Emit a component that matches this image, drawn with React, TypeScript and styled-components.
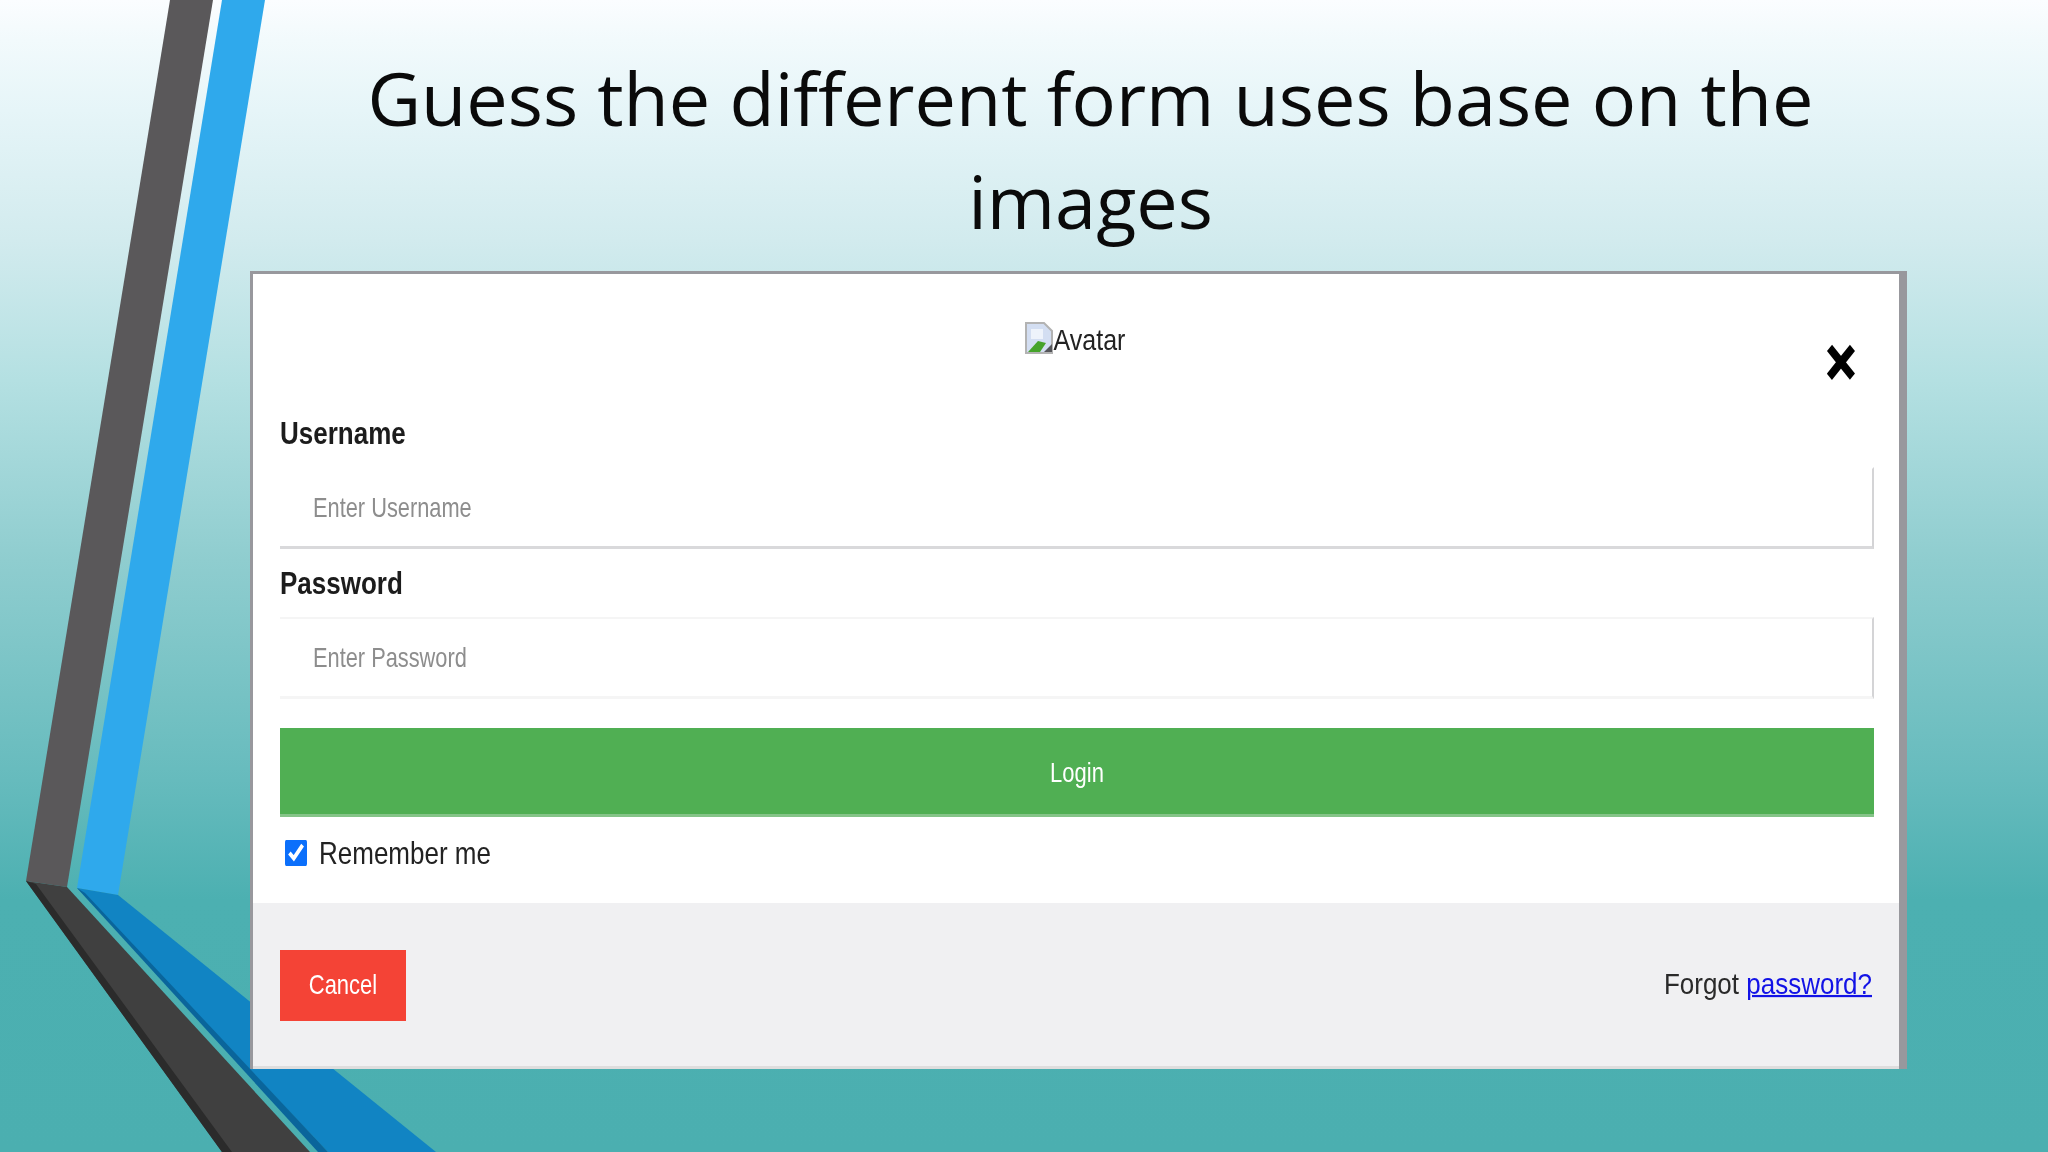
import React from 'react';
import styled, { createGlobalStyle } from 'styled-components';

const GlobalStyle = createGlobalStyle`
  html, body {
    margin: 0;
    padding: 0;
    background: #4bafb0;
  }
  * {
    box-sizing: border-box;
  }
`;

const Slide = styled.div`
  position: relative;
  width: 2048px;
  height: 1152px;
  overflow: hidden;
  font-family: 'Liberation Sans', Arial, sans-serif;
  background: linear-gradient(
    180deg,
    #fbfdff 0,
    #f2fafc 40px,
    #e6f5f8 110px,
    #d2ebee 240px,
    #b4e0e2 380px,
    #8fcdcf 560px,
    #66bbbd 780px,
    #4cb0b1 900px,
    #4bafb0 1152px
  );
`;

const Decor = styled.svg`
  position: absolute;
  left: 0;
  top: 0;
`;

const Content = styled.div`
  position: relative;
  display: flex;
  flex-direction: column;
  padding-left: 250px;
  width: 1907px;
`;

const Title = styled.h1`
  margin: 0 0 19px;
  padding-top: 46px;
  width: 1681px;
  text-align: center;
  font-family: 'Open Sans', sans-serif;
  font-weight: 400;
  font-size: 73.8px;
  line-height: 103px;
  color: #0a0a0a;
`;

const Card = styled.div`
  position: relative;
  display: flex;
  flex-direction: column;
  height: 798px;
  background: #fff;
  border-style: solid;
  border-color: #98989d;
  border-width: 3px 8px 0 3px;
`;

const Body = styled.div`
  flex: 1;
  padding: 0 25px 0 27px;
`;

const AvatarRow = styled.div`
  display: flex;
  justify-content: center;
  align-items: center;
  gap: 1px;
  height: 131px;
  padding: 2px 4px 0 0;

  svg {
    filter: blur(0.5px);
    margin-top: -6px;
  }
`;

const AvatarAlt = styled.span`
  display: inline-block;
  font-size: 25px;
  color: #222;
  transform: scaleY(1.15);
  filter: blur(0.6px);
`;

const Close = styled.span`
  position: absolute;
  right: 43px;
  top: 61px;
  font-size: 52px;
  line-height: 1;
  font-weight: 700;
  color: #000;
  -webkit-text-stroke: 1.5px #000;
  transform: scaleY(1.25);
`;

const Label = styled.label`
  display: flex;
  align-items: center;
  height: 56px;
  margin: 6px 0;
  font-size: 26px;
  font-weight: 700;
  color: #1c1c1c;

  &:first-of-type {
    margin-top: 0;
  }

  span {
    display: inline-block;
    transform: scaleY(1.18);
    filter: blur(0.6px);
  }
`;

const Field = styled.div<{ $bottom: string; $top: string }>`
  height: 82px;
  padding-left: 33px;
  display: flex;
  align-items: center;
  border-right: 2px solid #d4d4d6;
  border-top: 2px solid ${props => props.$top};
  border-bottom: 3px solid ${props => props.$bottom};
`;

const TextInput = styled.input`
  width: 100%;
  border: 0;
  outline: 0;
  background: transparent;
  padding: 0;
  font-family: inherit;
  font-size: 21.8px;
  transform: scaleY(1.25);
  transform-origin: left center;
  filter: blur(0.6px);

  &::placeholder {
    color: #8d8d8d;
    opacity: 1;
  }
`;

const LoginButton = styled.button`
  display: block;
  width: 100%;
  height: 89px;
  margin-top: 29px;
  padding: 3px 0 0;
  border: 0;
  border-bottom: 3px solid #85c488;
  background: #50af53;
  color: #fff;
  font-family: inherit;
  font-size: 22px;

  span {
    display: inline-block;
    transform: scaleY(1.22);
    filter: blur(0.6px);
  }
`;

const RememberRow = styled.label`
  display: flex;
  align-items: center;
  gap: 12px;
  height: 85px;
  padding: 0 0 13px 5px;
  font-size: 26px;
  color: #222;

  span {
    display: inline-block;
    transform: scaleY(1.18);
    filter: blur(0.6px);
  }
`;

const Check = styled.input`
  width: 22px;
  height: 22px;
  margin: 0;
  accent-color: #0b6ffb;
  transform: scaleY(1.2);
`;

const Footer = styled.div`
  display: flex;
  align-items: center;
  justify-content: space-between;
  height: 166px;
  padding: 1px 27px 0 27px;
  background: #f0f0f2;
  border-bottom: 3px solid #dedddd;
`;

const CancelButton = styled.button`
  width: 126px;
  height: 71px;
  padding: 0;
  border: 0;
  background: #f44336;
  color: #fff;
  font-family: inherit;
  font-size: 22px;

  span {
    display: inline-block;
    transform: scaleY(1.25);
    filter: blur(0.6px);
  }
`;

const Forgot = styled.span`
  display: inline-block;
  margin-top: -2px;
  font-size: 26px;
  color: #2a2a2a;
  transform: scaleY(1.1);
  filter: blur(0.5px);

  a {
    color: #1212e6;
    text-decoration-thickness: 2px;
  }
`;

const BrokenImage = () => (
  <svg width="28" height="32" viewBox="0 0 28 32">
    <path d="M1 1h18l8 8v22H1z" fill="#d3def2" stroke="#b3b3b3" strokeWidth="2" />
    <rect x="6" y="7" width="12" height="10" fill="#eef3fb" />
    <path d="M3 30l10-11 8 2-6 9z" fill="#45a32a" />
    <path d="M19 30l8-8v8z" fill="#55565a" />
  </svg>
);

const App = () => {
  return (
    <Slide>
      <GlobalStyle />
      <Decor width="2048" height="1152" viewBox="0 0 2048 1152">
        <polygon points="170,0 213,0 67,887 26,881" fill="#5a585a" />
        <polygon points="222,0 265,0 118,895 77,888" fill="#2fa9ec" />
        <polygon points="77,888 118,895 436,1152 328,1152" fill="#1184c3" />
        <polygon points="77,888 85,893 328,1152 318,1152" fill="#0a659b" />
        <polygon points="26,881 67,887 310,1152 222,1152" fill="#404040" />
        <polygon points="26,881 36,884 232,1152 222,1152" fill="#2b2b2b" />
      </Decor>
      <Content>
        <Title>Guess the different form uses base on the images</Title>
        <Card>
          <Close>×</Close>
          <Body>
            <AvatarRow>
              <BrokenImage />
              <AvatarAlt>Avatar</AvatarAlt>
            </AvatarRow>
            <Label><span>Username</span></Label>
            <Field $top="transparent" $bottom="#d9d9db">
              <TextInput placeholder="Enter Username" />
            </Field>
            <Label><span>Password</span></Label>
            <Field $top="#f5f5f5" $bottom="#f5f5f5">
              <TextInput type="password" placeholder="Enter Password" />
            </Field>
            <LoginButton><span>Login</span></LoginButton>
            <RememberRow>
              <Check type="checkbox" defaultChecked />
              <span>Remember me</span>
            </RememberRow>
          </Body>
          <Footer>
            <CancelButton><span>Cancel</span></CancelButton>
            <Forgot>Forgot <a href="#">password?</a></Forgot>
          </Footer>
        </Card>
      </Content>
    </Slide>
  );
};

export default App;
